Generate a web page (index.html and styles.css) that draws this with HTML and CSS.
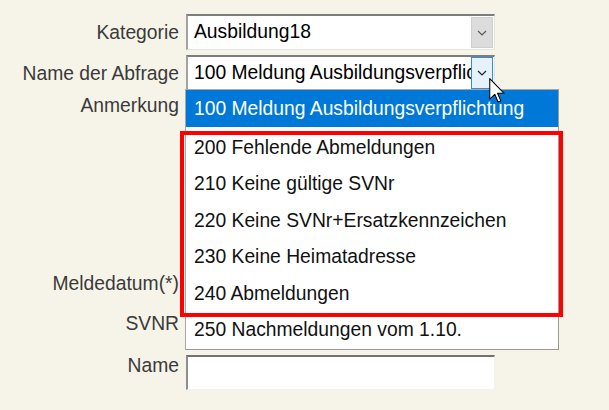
FILE: index.html
```html
<!DOCTYPE html>
<html lang="de">
<head>
  <meta charset="UTF-8">
  <title>Abfrage</title>
  <link rel="stylesheet" href="styles.css">
</head>
<body>
  <div class="form">
    <label class="lbl mid">Kategorie</label>
    <div class="select">
      <span class="value">Ausbildung18</span>
      <span class="btn">
        <svg width="10" height="6" viewBox="0 0 10 6"><polyline points="1,1 5,5 9,1" fill="none" stroke="#5a5a5a" stroke-width="1.2"/></svg>
      </span>
    </div>

    <label class="lbl mid">Name der Abfrage</label>
    <div class="select open">
      <span class="value">100 Meldung Ausbildungsverpflichtung</span>
      <span class="btn hover">
        <svg width="10" height="6" viewBox="0 0 10 6"><polyline points="1,1 5,5 9,1" fill="none" stroke="#222" stroke-width="1.2"/></svg>
      </span>
      <ul class="dropdown">
        <li class="item selected">100 Meldung Ausbildungsverpflichtung</li>
        <li class="item first">200 Fehlende Abmeldungen</li>
        <li class="item">210 Keine gültige SVNr</li>
        <li class="item">220 Keine SVNr+Ersatzkennzeichen</li>
        <li class="item">230 Keine Heimatadresse</li>
        <li class="item">240 Abmeldungen</li>
        <li class="item">250 Nachmeldungen vom 1.10.</li>
      </ul>
      <svg class="cursor" width="16" height="25" viewBox="0 0 12 19">
        <path d="M0.5,0.5 L0.5,16 L4.3,12.4 L6.8,18.3 L8.9,17.4 L6.4,11.6 L11.4,11.6 Z" fill="#fff" stroke="#000" stroke-width="0.8" stroke-linejoin="round"/>
      </svg>
    </div>

    <label class="lbl">Anmerkung</label>
    <textarea class="area"></textarea>

    <label class="lbl">Meldedatum(*)</label>
    <input class="field" type="text">

    <label class="lbl">SVNR</label>
    <input class="field" type="text">

    <label class="lbl">Name</label>
    <input class="field" type="text">
  </div>

  <div class="mark"></div>
</body>
</html>
```

FILE: styles.css
```css
body {
  margin: 0;
  padding-top: 14px;
  background: #f6f4e9;
  font-family: "Liberation Sans", Arial, sans-serif;
  font-size: 19.3px;
  color: #111;
}
.form {
  display: grid;
  grid-template-columns: 186px 309px;
  grid-template-rows: 36px 35px 173px 35px 37px 35px;
  row-gap: 5px;
}
.lbl {
  text-align: right;
  padding-right: 7px;
  line-height: 22px;
  color: #3a3a3a;
  align-self: start;
}
.lbl.mid {
  padding-top: 8px;
}
.select {
  position: relative;
  display: flex;
  box-sizing: border-box;
  background: #fff;
  border-top: 2px solid #7d7d7d;
  border-left: 2px solid #a2a2a2;
  border-right: 1px solid #e4e4e4;
  border-bottom: 1px solid #e4e4e4;
}
.select .value {
  flex: 1;
  overflow: hidden;
  white-space: nowrap;
  padding-left: 6px;
  line-height: 32px;
  color: #000;
}
.btn {
  display: flex;
  align-items: center;
  justify-content: center;
  width: 20px;
  margin: 1px 1px 1px 0;
  background: #dcdcdc;
  border: 1px solid #cfcfcf;
}
.btn.hover {
  margin: 0 1px 0 0;
  background: #e5f1fb;
  border-color: #2f8ee0;
}
.dropdown {
  position: absolute;
  left: -3px;
  top: 100%;
  margin: 0;
  padding: 0;
  list-style: none;
  width: 374px;
  height: 261px;
  box-sizing: border-box;
  background: #fff;
  border: 1px solid #a8a8a8;
  border-right-color: #9a9a9a;
  border-bottom-color: #9a9a9a;
  z-index: 2;
}
.item {
  height: 36.4px;
  line-height: 36.4px;
  padding-left: 8px;
  white-space: nowrap;
  color: #111;
}
.item.selected {
  height: 37px;
  line-height: 37px;
  background: #0078d7;
  color: #fff;
}
.item.first {
  margin-top: 3px;
}
.cursor {
  position: absolute;
  left: 301px;
  top: 21px;
  z-index: 3;
}
.area, .field {
  box-sizing: border-box;
  margin: 0;
  background: #fff;
  font: inherit;
  border-top: 2px solid #727272;
  border-left: 2px solid #8e8e8e;
  border-right: 1px solid #f2f2f2;
  border-bottom: 1px solid #f2f2f2;
  resize: none;
}
.mark {
  position: absolute;
  left: 180px;
  top: 131px;
  width: 383px;
  height: 186px;
  box-sizing: border-box;
  border: 4px solid #ff0000;
  z-index: 4;
}
```
